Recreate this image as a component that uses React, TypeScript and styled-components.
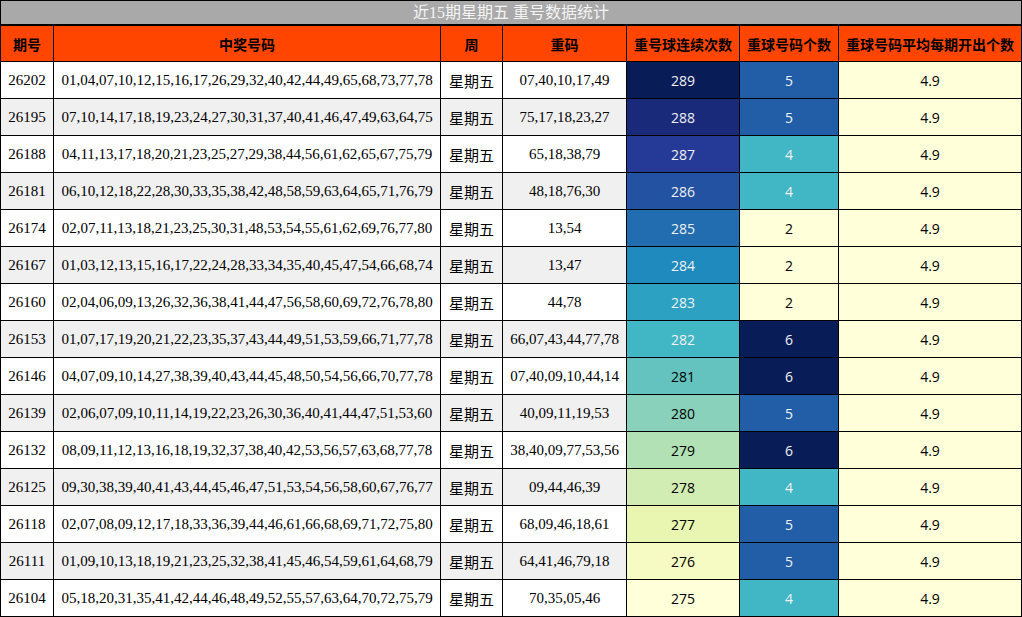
import React from "react";
import styled, { createGlobalStyle } from "styled-components";

const GlobalStyle = createGlobalStyle`
  html, body { margin: 0; padding: 0; background: #ffffff; }
  body { font-family: "Liberation Serif", "Noto Sans CJK SC", serif; }
`;

const Grid = styled.div`
  display: grid;
  grid-template-columns: 52px 386px 61px 123px 112px 98px 182px;
  grid-template-rows: 24px 35px;
  grid-auto-rows: 36px;
  gap: 1px;
  padding: 1px;
  width: 1022px;
  box-sizing: border-box;
  background: #000000;
`;

const Title = styled.div`
  grid-column: 1 / -1;
  background: #a9a9a9;
  border-bottom: 1px solid #000;
  color: #f4f4f4;
  font-family: "Liberation Serif", "Noto Sans CJK SC", serif;
  font-size: 16px;
  display: flex;
  align-items: center;
  justify-content: center;
  line-height: 1;
`;

const HeadCell = styled.div`
  background: #ff4500;
  color: #000;
  font-family: "Noto Sans CJK SC", sans-serif;
  font-weight: bold;
  font-size: 14px;
  display: flex;
  align-items: center;
  justify-content: center;
  white-space: nowrap;
`;

type Face = "serif" | "sans" | "cjk";

const fonts: Record<Face, string> = {
  serif: `"Liberation Serif", serif`,
  sans: `"Open Sans", "Liberation Sans", sans-serif`,
  cjk: `"Noto Sans CJK SC", sans-serif`,
};

const Cell = styled.div<{ $bg: string; $fg?: string; $face?: Face }>`
  background: ${(p) => p.$bg};
  color: ${(p) => p.$fg || "#000"};
  font-family: ${(p) => fonts[p.$face || "serif"]};
  font-size: ${(p) => (p.$face === "sans" ? "14px" : "15px")};
  display: flex;
  align-items: center;
  justify-content: center;
  white-space: nowrap;
`;

type Row = { id: string; nums: string; rep: string; streak: number; count: number };

const rows: Row[] = [
  { id: "26202", nums: "01,04,07,10,12,15,16,17,26,29,32,40,42,44,49,65,68,73,77,78", rep: "07,40,10,17,49", streak: 289, count: 5 },
  { id: "26195", nums: "07,10,14,17,18,19,23,24,27,30,31,37,40,41,46,47,49,63,64,75", rep: "75,17,18,23,27", streak: 288, count: 5 },
  { id: "26188", nums: "04,11,13,17,18,20,21,23,25,27,29,38,44,56,61,62,65,67,75,79", rep: "65,18,38,79", streak: 287, count: 4 },
  { id: "26181", nums: "06,10,12,18,22,28,30,33,35,38,42,48,58,59,63,64,65,71,76,79", rep: "48,18,76,30", streak: 286, count: 4 },
  { id: "26174", nums: "02,07,11,13,18,21,23,25,30,31,48,53,54,55,61,62,69,76,77,80", rep: "13,54", streak: 285, count: 2 },
  { id: "26167", nums: "01,03,12,13,15,16,17,22,24,28,33,34,35,40,45,47,54,66,68,74", rep: "13,47", streak: 284, count: 2 },
  { id: "26160", nums: "02,04,06,09,13,26,32,36,38,41,44,47,56,58,60,69,72,76,78,80", rep: "44,78", streak: 283, count: 2 },
  { id: "26153", nums: "01,07,17,19,20,21,22,23,35,37,43,44,49,51,53,59,66,71,77,78", rep: "66,07,43,44,77,78", streak: 282, count: 6 },
  { id: "26146", nums: "04,07,09,10,14,27,38,39,40,43,44,45,48,50,54,56,66,70,77,78", rep: "07,40,09,10,44,14", streak: 281, count: 6 },
  { id: "26139", nums: "02,06,07,09,10,11,14,19,22,23,26,30,36,40,41,44,47,51,53,60", rep: "40,09,11,19,53", streak: 280, count: 5 },
  { id: "26132", nums: "08,09,11,12,13,16,18,19,32,37,38,40,42,53,56,57,63,68,77,78", rep: "38,40,09,77,53,56", streak: 279, count: 6 },
  { id: "26125", nums: "09,30,38,39,40,41,43,44,45,46,47,51,53,54,56,58,60,67,76,77", rep: "09,44,46,39", streak: 278, count: 4 },
  { id: "26118", nums: "02,07,08,09,12,17,18,33,36,39,44,46,61,66,68,69,71,72,75,80", rep: "68,09,46,18,61", streak: 277, count: 5 },
  { id: "26111", nums: "01,09,10,13,18,19,21,23,25,32,38,41,45,46,54,59,61,64,68,79", rep: "64,41,46,79,18", streak: 276, count: 5 },
  { id: "26104", nums: "05,18,20,31,35,41,42,44,46,48,49,52,55,57,63,64,70,72,75,79", rep: "70,35,05,46", streak: 275, count: 4 },
];

const stops = ["#ffffd9", "#edf8b1", "#c7e9b4", "#7fcdbb", "#41b6c4", "#1d91c0", "#225ea8", "#253494", "#081d58"];

function hex(c: string) {
  return [1, 3, 5].map((i) => parseInt(c.slice(i, i + 2), 16));
}

function ylgnbu(t: number): [string, boolean] {
  const x = Math.max(0, Math.min(1, t)) * (stops.length - 1);
  const i = Math.min(stops.length - 2, Math.floor(x));
  const f = x - i;
  const a = hex(stops[i]);
  const b = hex(stops[i + 1]);
  const rgb = a.map((v, k) => Math.round(v + (b[k] - v) * f));
  const lum =
    0.2126 * Math.pow(rgb[0] / 255, 2.2) +
    0.7152 * Math.pow(rgb[1] / 255, 2.2) +
    0.0722 * Math.pow(rgb[2] / 255, 2.2);
  return [`rgb(${rgb[0]},${rgb[1]},${rgb[2]})`, lum < 0.408];
}

const headers = ["期号", "中奖号码", "周", "重码", "重号球连续次数", "重球号码个数", "重球号码平均每期开出个数"];

export default function App() {
  return (
    <>
      <GlobalStyle />
      <Grid>
        <Title>近15期星期五 重号数据统计</Title>
        {headers.map((h) => (
          <HeadCell key={h}>{h}</HeadCell>
        ))}
        {rows.map((r, idx) => {
          const zebra = idx % 2 === 0 ? "#ffffff" : "#f0f0f0";
          const [sBg, sDark] = ylgnbu((r.streak - 275) / 14);
          const [cBg, cDark] = ylgnbu((r.count - 2) / 4);
          return (
            <React.Fragment key={r.id}>
              <Cell $bg={zebra}>{r.id}</Cell>
              <Cell $bg={zebra}>{r.nums}</Cell>
              <Cell $bg={zebra} $face="cjk">星期五</Cell>
              <Cell $bg={zebra}>{r.rep}</Cell>
              <Cell $bg={sBg} $fg={sDark ? "#f1f1f1" : "#000"} $face="sans">{r.streak}</Cell>
              <Cell $bg={cBg} $fg={cDark ? "#f1f1f1" : "#000"} $face="sans">{r.count}</Cell>
              <Cell $bg="#ffffd9" $face="sans">4.9</Cell>
            </React.Fragment>
          );
        })}
      </Grid>
    </>
  );
}
